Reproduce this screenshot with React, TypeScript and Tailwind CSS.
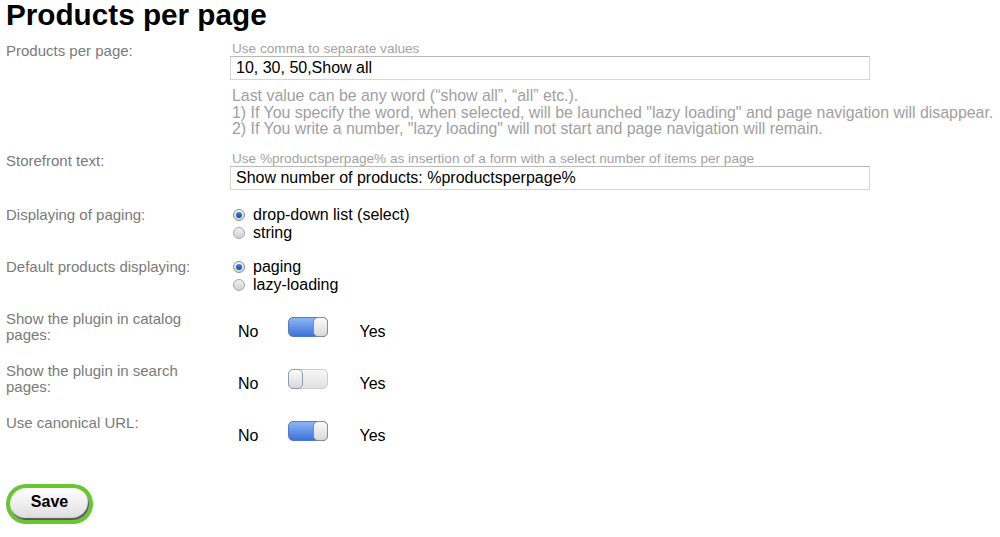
import { useState } from 'react';

function Radio({ checked, label, onClick }: { checked: boolean; label: string; onClick: () => void }) {
  return (
    <div className="flex h-[18px] cursor-pointer items-center" onClick={onClick}>
      <div
        className={`ml-[3px] flex h-[12px] w-[12px] items-center justify-center rounded-full border ${
          checked ? 'border-[#8c8c8c] bg-gradient-to-b from-[#f4f4f4] to-[#d6d6d6]' : 'border-[#a8a8a8] bg-gradient-to-b from-[#f2f2f2] to-[#d0d0d0]'
        }`}
      >
        {checked && <div className="h-[6px] w-[6px] rounded-full bg-gradient-to-b from-[#3f8bd6] to-[#0d4f9c]" />}
      </div>
      <span className="ml-[8px] text-[16px] text-black">{label}</span>
    </div>
  );
}

function Toggle({ on, onClick }: { on: boolean; onClick: () => void }) {
  return (
    <div className="pt-[6px] leading-[18px] text-[16px] text-black">
      <span className="ml-[8px]">No</span>
      <span
        onClick={onClick}
        className={`ml-[30px] inline-flex h-[20px] w-[40px] cursor-pointer rounded-[5px] border ${
          on
            ? 'justify-end border-[#4a7bd0] bg-gradient-to-b from-[#8db5f2] to-[#3b72d6]'
            : 'justify-start border-[#cdcdcd] bg-gradient-to-b from-[#f7f7f7] to-[#e2e2e2]'
        }`}
      >
        <span
          className={`-my-px h-[20px] w-[15px] rounded-[5px] border bg-gradient-to-b from-[#fbfbfb] to-[#d9d9d9] ${
            on ? '-mr-px border-[#8d8d8d]' : '-ml-px border-[#8f9bb0]'
          }`}
        />
      </span>
      <span className="ml-[31px]">Yes</span>
    </div>
  );
}

export default function App() {
  const [paging, setPaging] = useState<'select' | 'string'>('select');
  const [display, setDisplay] = useState<'paging' | 'lazy'>('paging');
  const [catalog, setCatalog] = useState(true);
  const [search, setSearch] = useState(false);
  const [canonical, setCanonical] = useState(true);

  const label = 'w-[230px] shrink-0 pl-[6px] pr-[24px] text-[15px] leading-[16px] text-[#7a7a7a]';
  const input =
    'h-[24px] w-[640px] border border-[#d6d6d6] border-t-[#b9b9b9] bg-white px-[5px] text-[16px] text-black outline-none';

  return (
    <div className="min-h-[537px] w-[1000px] bg-white font-['Liberation_Sans',Arial,sans-serif]">
      <h1 className="pl-[6px] text-[29.7px] font-bold leading-[29px] text-black">Products per page</h1>

      {/* Products per page */}
      <div className="mt-[13px] flex">
        <div className={`${label} pt-px`}>Products per page:</div>
        <div>
          <div className="pl-[2px] text-[13.6px] leading-[14px] text-[#a3a3a3]">Use comma to separate values</div>
          <input className={input} defaultValue="10, 30, 50,Show all" />
          <div className="mt-[8px] whitespace-nowrap pl-[2px] text-[15.9px] leading-[16.5px] text-[#a0a0a0]">
            <div>Last value can be any word (“show all”, “all” etc.).</div>
            <div>1) If You specify the word, when selected, will be launched "lazy loading" and page navigation will disappear.</div>
            <div>2) If You write a number, "lazy loading" will not start and page navigation will remain.</div>
          </div>
        </div>
      </div>

      {/* Storefront text */}
      <div className="mt-[14px] flex">
        <div className={`${label} pt-px`}>Storefront text:</div>
        <div>
          <div className="pl-[2px] text-[13.6px] leading-[14px] text-[#a3a3a3]">
            Use %productsperpage% as insertion of a form with a select number of items per page
          </div>
          <input className={input} defaultValue="Show number of products: %productsperpage%" />
        </div>
      </div>

      {/* Displaying of paging */}
      <div className="mt-[16px] flex">
        <div className={`${label} pt-px`}>Displaying of paging:</div>
        <div>
          <Radio checked={paging === 'select'} label="drop-down list (select)" onClick={() => setPaging('select')} />
          <Radio checked={paging === 'string'} label="string" onClick={() => setPaging('string')} />
        </div>
      </div>

      {/* Default products displaying */}
      <div className="mt-[16px] flex">
        <div className={`${label} pt-px`}>Default products displaying:</div>
        <div>
          <Radio checked={display === 'paging'} label="paging" onClick={() => setDisplay('paging')} />
          <Radio checked={display === 'lazy'} label="lazy-loading" onClick={() => setDisplay('lazy')} />
        </div>
      </div>

      <div className="mt-[17px] flex">
        <div className={label}>Show the plugin in catalog pages:</div>
        <Toggle on={catalog} onClick={() => setCatalog(!catalog)} />
      </div>

      <div className="mt-[20px] flex">
        <div className={label}>Show the plugin in search pages:</div>
        <Toggle on={search} onClick={() => setSearch(!search)} />
      </div>

      <div className="mt-[20px] flex">
        <div className={label}>Use canonical URL:</div>
        <Toggle on={canonical} onClick={() => setCanonical(!canonical)} />
      </div>

      <div className="mt-[39px] pl-[6px]">
        <button className="rounded-full bg-[#68c62f] p-[4px]">
          <div className="flex h-[32px] w-[79px] items-center justify-center rounded-full bg-gradient-to-b from-white to-[#dcdcdc] pb-[4px] text-[16px] font-bold text-black shadow-[inset_-1px_-2px_1px_#555]">
            Save
          </div>
        </button>
      </div>
    </div>
  );
}
